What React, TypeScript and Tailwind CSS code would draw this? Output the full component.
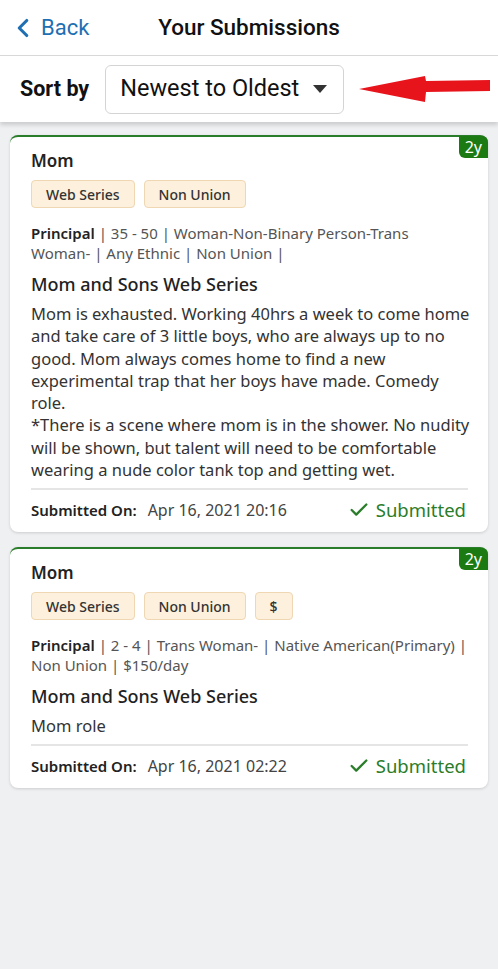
import { ChevronLeft, Check } from 'lucide-react'

interface Submission {
  role: string
  tags: string[]
  details: string
  project: string
  // description is kept as the lines the app shows
  description: string[]
  submittedOn: string
}

const submissions: Submission[] = [
  {
    role: 'Mom',
    tags: ['Web Series', 'Non Union'],
    details: ' | 35 - 50 | Woman-Non-Binary Person-Trans Woman- | Any Ethnic | Non Union |',
    project: 'Mom and Sons Web Series',
    description: [
      'Mom is exhausted. Working 40hrs a week to come home',
      'and take care of 3 little boys, who are always up to no',
      'good. Mom always comes home to find a new',
      'experimental trap that her boys have made. Comedy',
      'role.',
      '*There is a scene where mom is in the shower. No nudity',
      'will be shown, but talent will need to be comfortable',
      'wearing a nude color tank top and getting wet.',
    ],
    submittedOn: 'Apr 16, 2021 20:16',
  },
  {
    role: 'Mom',
    tags: ['Web Series', 'Non Union', '$'],
    details: ' | 2 - 4 | Trans Woman- | Native American(Primary) | Non Union | $150/day',
    project: 'Mom and Sons Web Series',
    description: ['Mom role'],
    submittedOn: 'Apr 16, 2021 02:22',
  },
]

function SubmissionCard({ item }: { item: Submission }) {
  return (
    <div className="relative bg-white rounded-lg border-t-2 border-[#2a7d2a] shadow-[0_1px_3px_rgba(0,0,0,0.15)] pl-[21px] pr-[20px] pt-[12px] pb-[8px]">
      {/* age badge */}
      <div className="absolute -top-[1px] right-0 bg-[#1b7a12] text-white text-[16px] leading-[22px] px-[6px] rounded-bl-md rounded-tr-md">
        2y
      </div>
      <div className="text-[17px] font-semibold text-[#222] leading-[24px]">{item.role}</div>
      <div className="flex gap-[9px] mt-[7px]">
        {item.tags.map(tag => (
          <span
            key={tag}
            className="h-[28px] flex items-center px-[14px] bg-[#fdf0dc] border border-[#efd7b3] rounded text-[14px] font-medium text-[#333]"
          >
            {tag}
          </span>
        ))}
      </div>
      <p className="mt-[15px] text-[15px] leading-[20px] text-[#555]">
        <b className="font-semibold text-[#222]">Principal</b>
        {item.details}
      </p>
      <div className="mt-[9px] text-[18px] font-medium text-[#222] leading-[24px]">{item.project}</div>
      <div className="mt-[7px] text-[16.5px] leading-[22.3px] text-[#333]">
        {item.description.map((line, i) => (
          <div key={i} className="whitespace-nowrap">{line}</div>
        ))}
      </div>
      <div className="mt-[7px] border-t-2 border-[#e5e5e5] pt-[6px] flex items-center justify-between">
        <div className="flex items-center">
          <span className="text-[15px] font-semibold text-[#222]">Submitted On:</span>
          <span className="ml-[11px] text-[16px] text-[#444]">{item.submittedOn}</span>
        </div>
        <div className="flex items-center gap-[6px] text-[18.5px] text-[#2a7d2a] mr-[2px]">
          <Check size={22} strokeWidth={2.5} />
          Submitted
        </div>
      </div>
    </div>
  )
}

export default function App() {
  return (
    <div className="min-h-[969px] bg-[#eff0f2] font-['Noto_Sans',sans-serif]">
      {/* top nav */}
      <div className="relative h-[56px] bg-white border-b border-[#d8d8d8] flex items-center font-['Roboto',sans-serif]">
        <div className="flex items-center pl-[8px] text-[#1e6fb3]">
          <ChevronLeft size={30} strokeWidth={2.5} />
          <span className="text-[22px] ml-[3px]">Back</span>
        </div>
        <div className="absolute left-0 right-0 text-center text-[22.5px] font-medium text-[#111] pointer-events-none">
          Your Submissions
        </div>
      </div>

      {/* sort bar */}
      <div className="h-[66px] bg-white flex items-center shadow-[0_3px_4px_rgba(0,0,0,0.15)] font-['Roboto',sans-serif]">
        <span className="ml-[20px] text-[21.5px] font-bold text-[#111]">Sort by</span>
        <div className="ml-[16px] w-[239px] h-[49px] border border-[#d4d4d4] rounded-md flex items-center justify-between pl-[14px] pr-[16px]">
          <span className="text-[23.5px] text-[#111]">Newest to Oldest</span>
          <svg width="14" height="8" viewBox="0 0 14 8">
            <path d="M0 0 L14 0 L7 8 Z" fill="#333" />
          </svg>
        </div>
        <svg className="ml-[15px]" width="131" height="28" viewBox="0 0 131 28">
          <path d="M0 14 L66 1 L67 6 L131 5 L131 16 L67 17 L66 27 Z" fill="#e8141c" />
        </svg>
      </div>

      {/* list */}
      <div className="flex flex-col gap-[15px] px-[10px] pt-[13px] pb-[16px]">
        {submissions.map((s, i) => (
          <SubmissionCard key={i} item={s} />
        ))}
      </div>
    </div>
  )
}
